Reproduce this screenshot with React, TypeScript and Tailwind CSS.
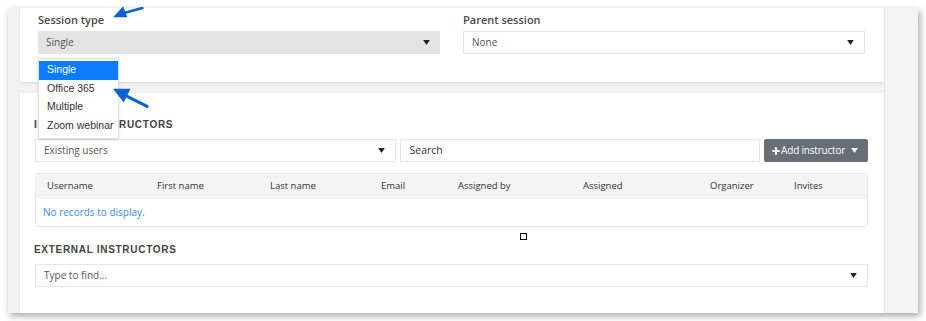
import { Plus } from "lucide-react"

const COLUMNS = [
  { label: "Username", w: "w-[110px]" },
  { label: "First name", w: "w-[113px]" },
  { label: "Last name", w: "w-[111px]" },
  { label: "Email", w: "w-[77px]" },
  { label: "Assigned by", w: "w-[125px]" },
  { label: "Assigned", w: "w-[127px]" },
  { label: "Organizer", w: "w-[84px]" },
  { label: "Invites", w: "w-[60px]" },
]

const OPTIONS = ["Single", "Office 365", "Multiple", "Zoom webinar"]

function Caret({ className = "" }: { className?: string }) {
  return (
    <svg viewBox="0 0 8 6" className={`h-[5px] w-[7px] ${className}`}>
      <path d="M0 0h8L4 6z" fill="currentColor" />
    </svg>
  )
}

function SelectBox({ value, gray, className = "" }: { value: string; gray?: boolean; className?: string }) {
  return (
    <div
      className={`flex h-[23px] items-center justify-between pl-[8px] pr-[10px] text-[10px] text-[#555] ${
        gray ? "bg-[#e4e4e4]" : "border border-[#e3e6ea] bg-white"
      } ${className}`}
    >
      <span>{value}</span>
      <Caret className="text-[#222]" />
    </div>
  )
}

function Arrow({ className, d, head }: { className: string; d: string; head: string }) {
  return (
    <svg viewBox="0 0 40 24" className={`absolute ${className}`}>
      <path d={d} stroke="#0b63cf" strokeWidth="3.2" fill="none" strokeLinecap="round" />
      <path d={head} fill="#0b63cf" />
    </svg>
  )
}

export default function App() {
  return (
    <div className="relative h-[321px] w-[926px] overflow-hidden bg-white" style={{ fontFamily: '"Open Sans", "Noto Sans", sans-serif' }}>
      <div className="ml-[8px] mt-[8px] flex h-[305px] w-[910px] overflow-hidden bg-[#f2f2f2] shadow-[2px_3px_7px_rgba(0,0,0,0.35)]">
        <div className="w-[12px] shrink-0" />
        <div className="flex w-[864px] shrink-0 flex-col gap-[11px]">
          {/* session card */}
          <div className="h-[74px] shrink-0 bg-white px-[18px] pt-[5px] shadow-[0_1px_2px_rgba(0,0,0,0.12)]">
            <div className="flex gap-[23px]">
              <div className="w-[402px]">
                <div className="mb-[4px] text-[11px] leading-[14px] font-semibold text-[#4a4a4a]">Session type</div>
                <SelectBox value="Single" gray />
              </div>
              <div className="w-[402px]">
                <div className="mb-[4px] text-[11px] leading-[14px] font-semibold text-[#4a4a4a]">Parent session</div>
                <SelectBox value="None" />
              </div>
            </div>
          </div>

          {/* instructors card */}
          <div className="flex-1 bg-white pl-[14px] pr-[16px] pt-[25px] shadow-[0_1px_2px_rgba(0,0,0,0.12)]">
            <h3
              className="text-[10px] leading-[14px] font-bold tracking-[0.7px] text-[#444]"
              style={{ fontFamily: '"Liberation Sans", Arial, sans-serif' }}
            >
              INTERNAL INSTRUCTORS
            </h3>
            <div className="mt-[7px] flex items-center gap-[4px] pl-[1px]">
              <SelectBox value="Existing users" className="w-[361px]" />
              <div className="flex h-[23px] w-[361px] items-center border border-[#e3e6ea] pl-[9px] text-[10.5px] text-[#333]">Search</div>
              <button className="flex h-[23px] w-[104px] items-center justify-between whitespace-nowrap rounded-[2px] bg-[#676e75] pl-[7px] pr-[10px] text-[10px] tracking-[-0.2px] text-white">
                <span className="flex items-center">
                  <Plus className="h-[10px] w-[10px]" strokeWidth={5} />
                  Add instructor
                </span>
                <Caret className="text-white" />
              </button>
            </div>

            <div className="ml-[1px] mt-[11px] overflow-hidden rounded-[3px] border border-[#e6e6e6]">
              <div className="flex h-[25px] items-center bg-[#f4f4f4] pl-[11px] text-[9.5px] text-[#333]">
                {COLUMNS.map((c) => (
                  <div key={c.label} className={c.w}>
                    {c.label}
                  </div>
                ))}
              </div>
              <div className="flex h-[27px] items-center pl-[7px] text-[10px] text-[#3a8ee6]">No records to display.</div>
            </div>

            <div className="ml-[486px] mt-[6px] h-[7px] w-[7px] border border-black bg-white" />

            <h3
              className="mt-[3px] text-[10px] leading-[14px] font-bold tracking-[0.7px] text-[#444]"
              style={{ fontFamily: '"Liberation Sans", Arial, sans-serif' }}
            >
              EXTERNAL INSTRUCTORS
            </h3>
            <SelectBox value="Type to find..." className="ml-[1px] mt-[7px]" />
          </div>
        </div>
        <div className="w-[34px] shrink-0 border-l border-[#e6e6e6] bg-[#f3f3f3]" />
      </div>

      {/* dropdown of session type */}
      <div
        className="absolute left-[38px] top-[58px] w-[81px] rounded-[2px] border border-[#e0e0e0] bg-white pb-[3px] pt-[2px] text-[10.5px] text-[#333] shadow-[0_1px_3px_rgba(0,0,0,0.15)]"
        style={{ fontFamily: '"Liberation Sans", Arial, sans-serif' }}
      >
        {OPTIONS.map((o, i) => (
          <div key={o} className={`flex h-[18.5px] items-center pl-[8px] ${i === 0 ? "bg-[#0a7cff] text-white" : ""}`}>
            {o}
          </div>
        ))}
      </div>

      <Arrow className="left-[110px] top-[3px] h-[20px] w-[38px]" d="M36 6 L14 12" head="M1 17 L13 4 L18 17 Z" />
      <Arrow className="left-[112px] top-[85px] h-[25px] w-[39px]" d="M36 21 L14 10" head="M1 3 L19 3 L12 17 Z" />
    </div>
  )
}
